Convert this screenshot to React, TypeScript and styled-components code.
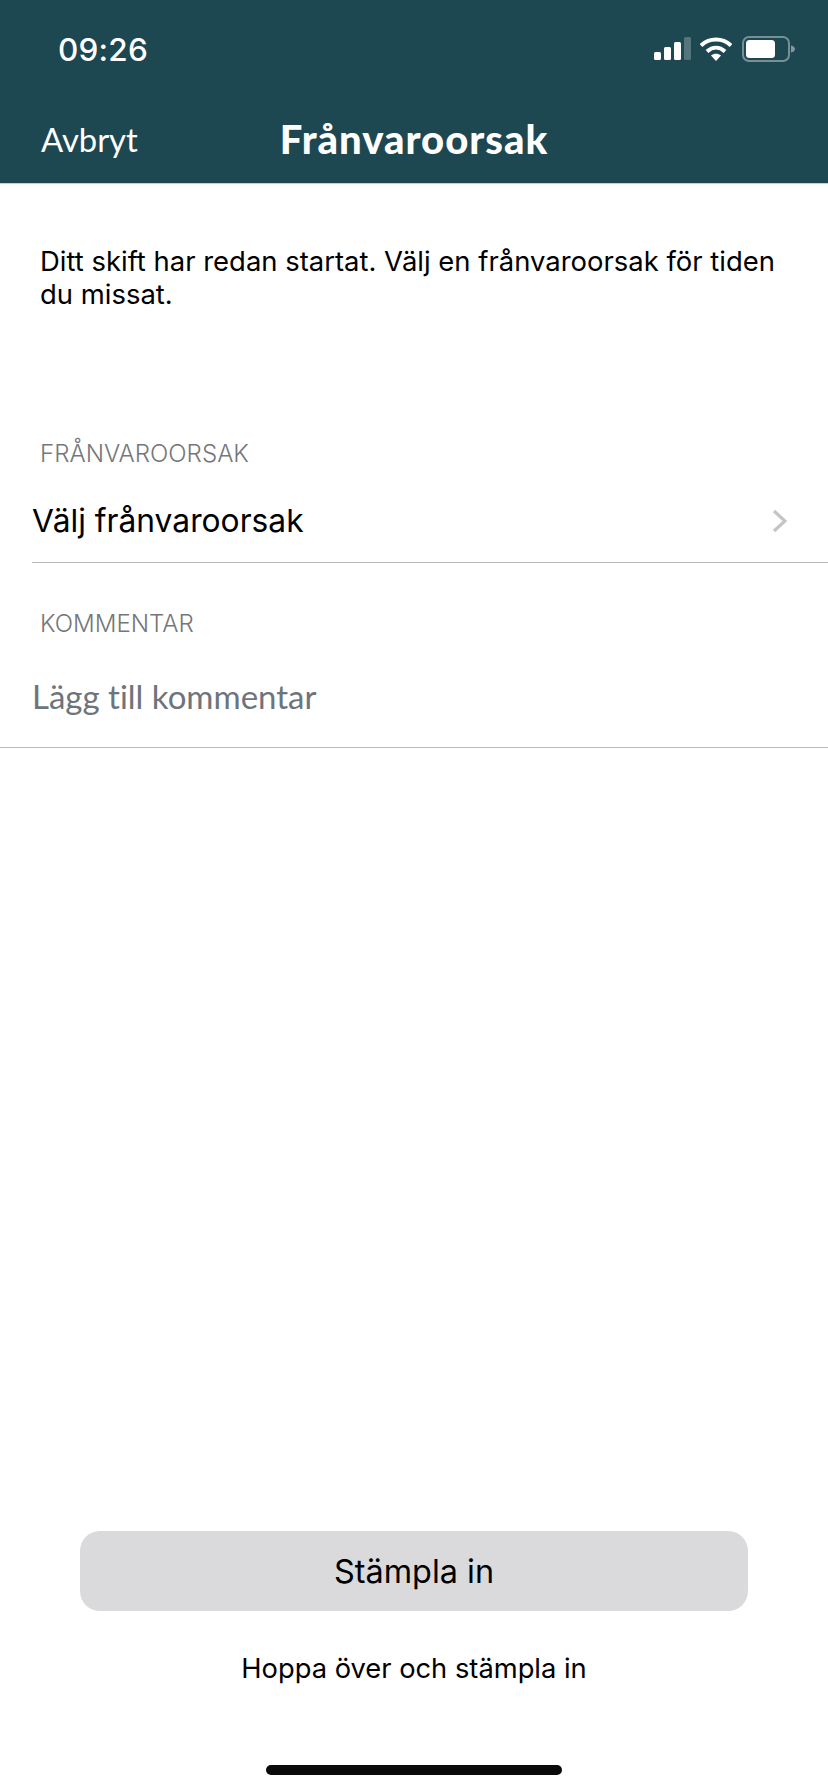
import React from 'react'
import styled, { createGlobalStyle } from 'styled-components'

const GlobalStyle = createGlobalStyle`
  html, body {
    margin: 0;
    padding: 0;
    background: #fff;
  }
  * {
    box-sizing: border-box;
  }
`

const Screen = styled.div`
  width: 828px;
  height: 1792px;
  display: flex;
  flex-direction: column;
  background: #fff;
  font-family: Inter, Roboto, "Liberation Sans", sans-serif;
  color: #000;
  overflow: hidden;
`

const Header = styled.header`
  height: 184px;
  flex: none;
  background: #1d4751;
  border-bottom: 1px solid #c9cfd0;
  color: #fff;
  display: flex;
  flex-direction: column;
`

const StatusBar = styled.div`
  height: 98px;
  padding: 0 32px 0 58px;
  display: flex;
  align-items: center;
  justify-content: space-between;
`

const Time = styled.span`
  font-family: Inter, sans-serif;
  font-size: 31.5px;
  font-weight: 500;
  letter-spacing: 0.2px;
`

const StatusIcons = styled.div`
  display: flex;
  align-items: center;
`

const NavBar = styled.div`
  position: relative;
  height: 82px;
  padding: 0 41px;
  display: flex;
  align-items: center;
`

const CancelLink = styled.span`
  font-family: Lato, sans-serif;
  font-size: 32.8px;
  font-weight: 400;
`

const Title = styled.h1`
  position: absolute;
  left: 0;
  right: 0;
  margin: 0;
  text-align: center;
  font-family: Lato, sans-serif;
  font-size: 40px;
  font-weight: 900;
  letter-spacing: 1px;
`

const Intro = styled.p`
  margin: 0;
  padding: 61px 40px 0;
  height: 255px;
  font-size: 27.45px;
  line-height: 33px;
  font-weight: 400;
`

const FieldLabel = styled.div`
  padding-left: 40px;
  font-size: 24.1px;
  font-weight: 300;
  line-height: 30px;
  color: #74777a;
`

const CommentLabel = styled(FieldLabel)`
  margin-top: 46px;
`

const FieldRow = styled.div<{ $inset: boolean; $height: number }>`
  margin-left: ${({ $inset }) => ($inset ? '32px' : '0')};
  padding-left: ${({ $inset }) => ($inset ? '0' : '32px')};
  padding-right: 41px;
  padding-top: ${({ $inset }) => ($inset ? '10px' : '6px')};
  height: ${({ $height }) => $height}px;
  display: flex;
  align-items: center;
  justify-content: space-between;
  border-bottom: 1px solid #b9b9bb;
`

const FieldValue = styled.span`
  font-size: 31.75px;
  color: #000;
`

const Placeholder = styled.span`
  font-family: Lato, sans-serif;
  font-size: 33px;
  font-variant-ligatures: none;
  color: #6d747c;
`

const Spacer = styled.div`
  flex: 1;
`

const Actions = styled.div`
  padding: 0 80px;
  display: flex;
  flex-direction: column;
  align-items: center;
`

const PrimaryButton = styled.button`
  width: 100%;
  height: 80px;
  border: none;
  border-radius: 20px;
  background: #dadadc;
  color: #000;
  font-family: Inter, sans-serif;
  font-size: 32.4px;
  font-weight: 400;
`

const SkipLink = styled.span`
  margin-top: 40px;
  font-size: 27.3px;
  line-height: 36px;
`

const HomeBar = styled.div`
  flex: none;
  width: 296px;
  height: 10px;
  margin: 78px auto 17px;
  border-radius: 5px;
  background: #0a0a0a;
`

const Signal = () => (
  <svg width="38" height="24" viewBox="0 0 38 24">
    <rect x="1" y="15" width="7" height="8" rx="1.5" fill="#fff" />
    <rect x="11" y="10" width="7" height="13" rx="1.5" fill="#fff" />
    <rect x="21" y="5" width="7" height="18" rx="1.5" fill="#fff" />
    <rect x="31" y="0" width="7" height="23" rx="1.5" fill="#fff" fillOpacity="0.25" />
  </svg>
)

const Wifi = () => (
  <svg width="32" height="24" viewBox="0 0 32 24" style={{ marginLeft: 9 }}>
    <path d="M1 8.5C9.5 0.5 22.5 0.5 31 8.5" fill="none" stroke="#fff" strokeWidth="4" />
    <path d="M7 14.5C12.5 9.5 19.5 9.5 25 14.5" fill="none" stroke="#fff" strokeWidth="4" />
    <path d="M11 18.5C14 16 18 16 21 18.5L16 24Z" fill="#fff" />
  </svg>
)

const Battery = () => (
  <svg width="54" height="26" viewBox="0 0 54 26" style={{ marginLeft: 10 }}>
    <rect x="1" y="1" width="46" height="24" rx="6" fill="none" stroke="#fff" strokeOpacity="0.4" strokeWidth="2" />
    <rect x="4" y="4" width="29" height="18" rx="3.5" fill="#fff" />
    <path d="M49 9.5C51.5 10 53 11.5 53 13C53 14.5 51.5 16 49 16.5Z" fill="#fff" fillOpacity="0.45" />
  </svg>
)

const Chevron = () => (
  <svg width="15" height="24" viewBox="0 0 15 24">
    <path d="M2 2L13 12L2 22" fill="none" stroke="#c4c4c6" strokeWidth="3.2" />
  </svg>
)

const App: React.FunctionComponent = () => {
  return (
    <Screen>
      <GlobalStyle />
      <Header>
        <StatusBar>
          <Time>09:26</Time>
          <StatusIcons>
            <Signal />
            <Wifi />
            <Battery />
          </StatusIcons>
        </StatusBar>
        <NavBar>
          <CancelLink>Avbryt</CancelLink>
          <Title>Frånvaroorsak</Title>
        </NavBar>
      </Header>
      <Intro>Ditt skift har redan startat. Välj en frånvaroorsak för tiden du missat.</Intro>
      <FieldLabel>FRÅNVAROORSAK</FieldLabel>
      <FieldRow $inset $height={94}>
        <FieldValue>Välj frånvaroorsak</FieldValue>
        <Chevron />
      </FieldRow>
      <CommentLabel>KOMMENTAR</CommentLabel>
      <FieldRow $inset={false} $height={109}>
        <Placeholder>Lägg till kommentar</Placeholder>
      </FieldRow>
      <Spacer />
      <Actions>
        <PrimaryButton>Stämpla in</PrimaryButton>
        <SkipLink>Hoppa över och stämpla in</SkipLink>
      </Actions>
      <HomeBar />
    </Screen>
  )
}

export default App
